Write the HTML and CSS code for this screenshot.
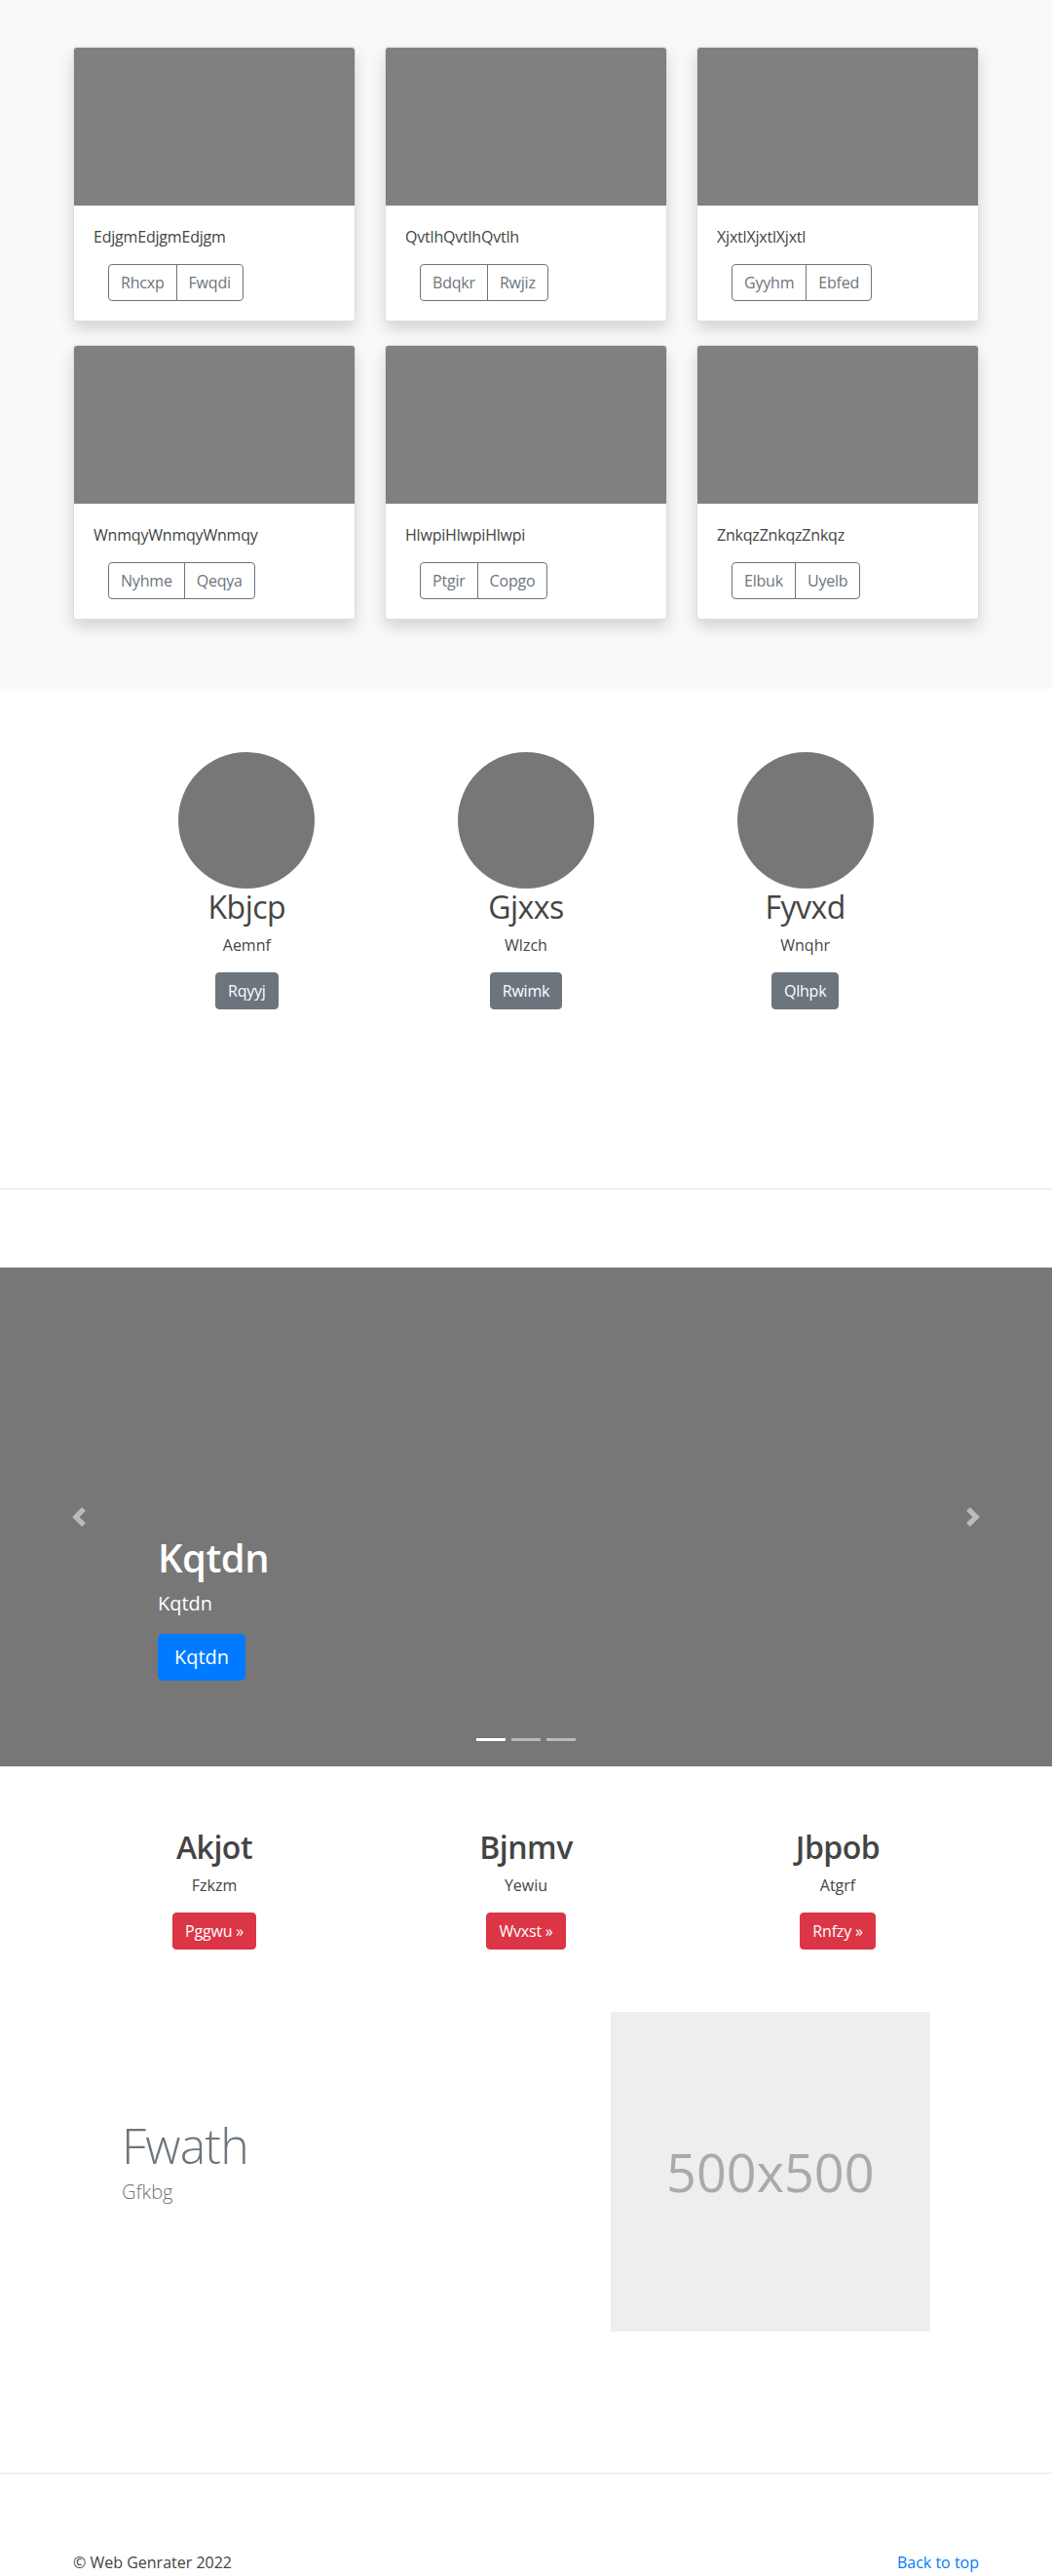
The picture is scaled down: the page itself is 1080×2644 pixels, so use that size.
FILE: index.html
```html
<!DOCTYPE html>
<html lang="en">
<head>
<meta charset="utf-8">
<title>Web Genrater</title>
<link rel="stylesheet" href="styles.css">
</head>
<body>
<section class="album">
  <div class="album-grid">
    <div class="card">
      <div class="card-img"></div>
      <div class="card-body">
        <p class="card-text">EdjgmEdjgmEdjgm</p>
        <div class="btn-group"><button class="btn-outline">Rhcxp</button><button class="btn-outline">Fwqdi</button></div>
      </div>
    </div>
    <div class="card">
      <div class="card-img"></div>
      <div class="card-body">
        <p class="card-text">QvtlhQvtlhQvtlh</p>
        <div class="btn-group"><button class="btn-outline">Bdqkr</button><button class="btn-outline">Rwjiz</button></div>
      </div>
    </div>
    <div class="card">
      <div class="card-img"></div>
      <div class="card-body">
        <p class="card-text">XjxtlXjxtlXjxtl</p>
        <div class="btn-group"><button class="btn-outline">Gyyhm</button><button class="btn-outline">Ebfed</button></div>
      </div>
    </div>
    <div class="card">
      <div class="card-img"></div>
      <div class="card-body">
        <p class="card-text">WnmqyWnmqyWnmqy</p>
        <div class="btn-group"><button class="btn-outline">Nyhme</button><button class="btn-outline">Qeqya</button></div>
      </div>
    </div>
    <div class="card">
      <div class="card-img"></div>
      <div class="card-body">
        <p class="card-text">HlwpiHlwpiHlwpi</p>
        <div class="btn-group"><button class="btn-outline">Ptgir</button><button class="btn-outline">Copgo</button></div>
      </div>
    </div>
    <div class="card">
      <div class="card-img"></div>
      <div class="card-body">
        <p class="card-text">ZnkqzZnkqzZnkqz</p>
        <div class="btn-group"><button class="btn-outline">Elbuk</button><button class="btn-outline">Uyelb</button></div>
      </div>
    </div>
  </div>
</section>

<section class="marketing">
  <div class="marketing-row">
    <div class="person">
      <div class="avatar"></div>
      <h2 class="person-name">Kbjcp</h2>
      <p class="person-role">Aemnf</p>
      <p class="person-action"><button class="btn btn-secondary">Rqyyj</button></p>
    </div>
    <div class="person">
      <div class="avatar"></div>
      <h2 class="person-name">Gjxxs</h2>
      <p class="person-role">Wlzch</p>
      <p class="person-action"><button class="btn btn-secondary">Rwimk</button></p>
    </div>
    <div class="person">
      <div class="avatar"></div>
      <h2 class="person-name">Fyvxd</h2>
      <p class="person-role">Wnqhr</p>
      <p class="person-action"><button class="btn btn-secondary">Qlhpk</button></p>
    </div>
  </div>
</section>

<hr class="divider">

<section class="carousel">
  <a class="carousel-control prev" href="#">
    <svg width="20" height="20" viewBox="0 0 8 8"><path fill="#fff" d="M5.25 0l-4 4 4 4 1.5-1.5L4.25 4l2.5-2.5L5.25 0z"/></svg>
  </a>
  <a class="carousel-control next" href="#">
    <svg width="20" height="20" viewBox="0 0 8 8"><path fill="#fff" d="M2.75 0l-1.5 1.5L3.75 4l-2.5 2.5L2.75 8l4-4-4-4z"/></svg>
  </a>
  <div class="carousel-caption">
    <h1 class="caption-title">Kqtdn</h1>
    <p class="caption-text">Kqtdn</p>
    <p class="caption-action"><a class="btn-lg" href="#">Kqtdn</a></p>
  </div>
  <ol class="indicators">
    <li class="indicator active"></li>
    <li class="indicator"></li>
    <li class="indicator"></li>
  </ol>
</section>

<section class="features">
  <div class="features-row">
    <div class="feature">
      <h2 class="feature-title">Akjot</h2>
      <p class="feature-text">Fzkzm</p>
      <p class="feature-action"><button class="btn btn-danger">Pggwu »</button></p>
    </div>
    <div class="feature">
      <h2 class="feature-title">Bjnmv</h2>
      <p class="feature-text">Yewiu</p>
      <p class="feature-action"><button class="btn btn-danger">Wvxst »</button></p>
    </div>
    <div class="feature">
      <h2 class="feature-title">Jbpob</h2>
      <p class="feature-text">Atgrf</p>
      <p class="feature-action"><button class="btn btn-danger">Rnfzy »</button></p>
    </div>
  </div>
</section>

<section class="featurette">
  <div class="featurette-row">
    <div class="featurette-text">
      <h2 class="featurette-heading">Fwath</h2>
      <p class="lead">Gfkbg</p>
    </div>
    <div class="featurette-media">
      <div class="placeholder"><span>500x500</span></div>
    </div>
  </div>
</section>

<hr class="divider">

<footer class="footer">
  <p class="copyright">© Web Genrater 2022</p>
  <a class="back-top" href="#">Back to top</a>
</footer>
</body>
</html>
```

FILE: styles.css
```css
* { box-sizing: border-box; }

html, body { overflow-x: hidden; }

body {
  margin: 0;
  font-family: "Open Sans", "Noto Sans", "Liberation Sans", sans-serif;
  font-size: 16px;
  line-height: 1.5;
  color: #444;
  background: #fff;
}

p { margin: 0; }
h1, h2 { margin: 0; }

button { font-family: inherit; }

/* ---------- album ---------- */
.album {
  background: #f8f9fa;
  padding: 48px 0 47px;
}

.album-grid {
  width: 930px;
  margin: 0 auto;
  display: grid;
  grid-template-columns: repeat(3, 290px);
  column-gap: 30px;
  row-gap: 24px;
  padding-bottom: 24px;
}

.card {
  background: #fff;
  border: 1px solid rgba(0, 0, 0, .125);
  border-radius: 4px;
  overflow: hidden;
  box-shadow: 0 8px 16px rgba(0, 0, 0, .15);
}

.card-img {
  height: 162px;
  background: #808080;
}

.card-body {
  padding: 20px;
}

.card-text {
  line-height: 24px;
  margin-bottom: 16px;
  letter-spacing: -0.2px;
}

.btn-group {
  display: inline-flex;
  margin-left: 15px;
}

.btn-outline {
  font-size: 16px;
  line-height: 24px;
  padding: 6px 12px;
  background: transparent;
  color: #6c757d;
  border: 1px solid #6c757d;
  border-radius: 0;
  letter-spacing: -0.2px;
}

.btn-outline:first-child { border-radius: 4px 0 0 4px; }
.btn-outline:last-child { border-radius: 0 4px 4px 0; margin-left: -1px; }

/* ---------- buttons ---------- */
.btn {
  font-size: 16px;
  line-height: 24px;
  padding: 6px 12px;
  border: 1px solid transparent;
  border-radius: 4px;
  color: #fff;
  letter-spacing: -0.2px;
}

.btn-secondary { background: #6c757d; border-color: #6c757d; }
.btn-danger { background: #dc3545; border-color: #dc3545; }

/* ---------- marketing ---------- */
.marketing {
  padding: 65px 0 168px;
}

.marketing-row {
  width: 860px;
  margin: 0 auto;
  display: grid;
  grid-template-columns: repeat(3, 1fr);
  text-align: center;
}

.person { display: flex; flex-direction: column; align-items: center; }

.avatar {
  width: 140px;
  height: 140px;
  border-radius: 50%;
  background: #777;
}

.person-name {
  font-size: 32px;
  font-weight: 400;
  line-height: 38px;
  margin-bottom: 8px;
  letter-spacing: -0.5px;
}

.person-role {
  line-height: 24px;
  margin: 0 12px 16px;
}

.person-action { line-height: 0; margin-bottom: 16px; }

.divider {
  margin: 0;
  border: 0;
  border-top: 1px solid rgba(0, 0, 0, .1);
}

/* ---------- carousel ---------- */
.carousel {
  position: relative;
  height: 512px;
  margin: 80px 0 64px;
  background: #777;
  overflow: hidden;
}

.carousel-control {
  position: absolute;
  top: 0;
  bottom: 0;
  width: 15%;
  display: flex;
  align-items: center;
  justify-content: center;
  opacity: .5;
}

.carousel-control.prev { left: 0; }
.carousel-control.next { right: 0; }

.carousel-caption {
  position: absolute;
  left: 15%;
  right: 15%;
  bottom: 52px;
  padding: 20px 0;
  color: #fff;
}

.caption-title {
  font-size: 40px;
  font-weight: 600;
  line-height: 48px;
  margin-bottom: 8px;
  letter-spacing: -0.5px;
}

.caption-text {
  font-size: 20px;
  line-height: 30px;
  margin-bottom: 16px;
}

.caption-action { line-height: 0; margin-bottom: 16px; }

.btn-lg {
  display: inline-block;
  font-size: 20px;
  line-height: 30px;
  padding: 8px 16px;
  border: 1px solid #007bff;
  background: #007bff;
  color: #fff;
  border-radius: 4.8px;
  text-decoration: none;
}

.indicators {
  position: absolute;
  left: 15%;
  right: 15%;
  bottom: 26px;
  margin: 0;
  padding: 0;
  list-style: none;
  display: flex;
  justify-content: center;
  gap: 6px;
}

.indicator {
  width: 30px;
  height: 3px;
  background: rgba(255, 255, 255, .5);
}

.indicator.active { background: #fff; }

/* ---------- features ---------- */
.features {
  padding-bottom: 48px;
}

.features-row {
  width: 960px;
  margin: 0 auto;
  display: grid;
  grid-template-columns: repeat(3, 1fr);
  text-align: center;
}

.feature-title {
  font-size: 32px;
  font-weight: 600;
  line-height: 38px;
  margin-bottom: 8px;
  letter-spacing: -0.5px;
}

.feature-text {
  line-height: 24px;
  margin-bottom: 16px;
}

.feature-action { line-height: 0; margin-bottom: 16px; }

/* ---------- featurette ---------- */
.featurette {
  padding-bottom: 145px;
}

.featurette-row {
  width: 860px;
  margin: 0 auto;
  display: grid;
  grid-template-columns: 7fr 5fr;
}

.featurette-text { padding: 0 15px; }
.featurette-media { padding: 0 15px; }

.featurette-heading {
  margin-top: 112px;
  margin-bottom: 8px;
  font-size: 50px;
  font-weight: 300;
  line-height: 1;
  letter-spacing: -0.8px;
  color: #6c757d;
}

.lead {
  font-size: 20px;
  font-weight: 300;
  line-height: 30px;
  color: #6c757d;
}

.placeholder {
  aspect-ratio: 1 / 1;
  background: #eee;
  display: flex;
  align-items: center;
  justify-content: center;
  color: #aaa;
  font-size: 54px;
}

/* ---------- footer ---------- */
.footer {
  width: 930px;
  margin: 0 auto;
  padding-top: 80px;
  display: flex;
  justify-content: space-between;
  line-height: 23px;
}

.back-top {
  color: #007bff;
  text-decoration: none;
}
```
